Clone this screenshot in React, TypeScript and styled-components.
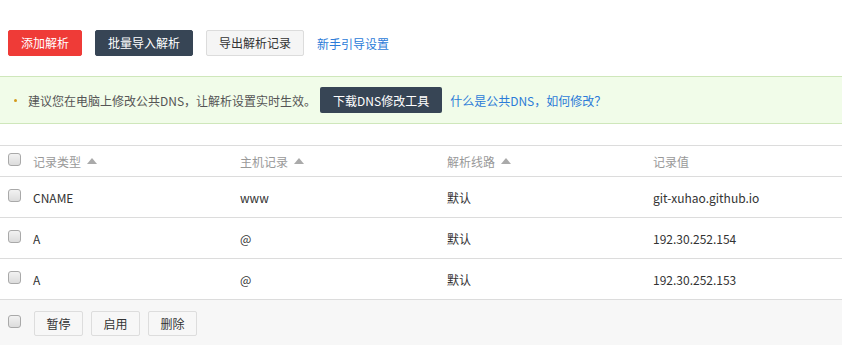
import React from "react";
import styled, { createGlobalStyle } from "styled-components";

const Global = createGlobalStyle`
  html, body { margin: 0; padding: 0; background: #fff; }
  body { font-family: "Noto Sans CJK SC", "Noto Sans", sans-serif; font-size: 12px; color: #333; }
`;

const Page = styled.div`
  width: 842px;
`;

const Toolbar = styled.div`
  display: flex;
  align-items: center;
  gap: 13px;
  padding: 30px 8px 0 8px;
  height: 26px;
`;

const Button = styled.button<{ $variant: "red" | "dark" | "light" }>`
  height: 26px;
  padding: 0 12px;
  border-radius: 2px;
  font-family: inherit;
  font-size: 12px;
  line-height: 24px;
  cursor: pointer;
  border: 1px solid
    ${(p) => (p.$variant === "red" ? "#ef3b37" : p.$variant === "dark" ? "#374555" : "#dcdcdc")};
  background: ${(p) => (p.$variant === "red" ? "#ef3b37" : p.$variant === "dark" ? "#374555" : "#f5f5f5")};
  color: ${(p) => (p.$variant === "light" ? "#333" : "#fff")};
`;

const Link = styled.a`
  color: #2b7bd8;
  font-size: 12px;
  text-decoration: none;
`;

const Banner = styled.div`
  margin-top: 20px;
  height: 46px;
  background: #f1fce9;
  border-top: 1px solid #cfe7bb;
  border-bottom: 1px solid #cfe7bb;
  display: flex;
  align-items: center;
  padding-left: 14px;
  color: #555;
  font-size: 12px;
`;

const Dot = styled.span`
  width: 3px;
  height: 3px;
  border-radius: 50%;
  background: #d49a1c;
  margin-right: 11px;
`;

const SmallDark = styled.button`
  margin: 0 8px 0 4px;
  height: 26px;
  padding: 0 13px;
  border: none;
  border-radius: 2px;
  background: #374555;
  color: #fff;
  font-family: inherit;
  font-size: 12px;
`;

const Table = styled.div`
  margin-top: 21px;
  border-top: 1px solid #dcdcdc;
`;

const Row = styled.div<{ $head?: boolean }>`
  display: grid;
  grid-template-columns: 33px 207px 207px 206px 1fr;
  align-items: center;
  height: ${(p) => (p.$head ? "30px" : "40px")};
  border-bottom: 1px solid #dcdcdc;
  color: ${(p) => (p.$head ? "#999" : "#333")};
  font-size: 12px;
`;

const CheckCell = styled.div`
  padding-left: 8px;
  display: flex;
  align-items: center;
`;

const Check = styled.span`
  display: inline-block;
  width: 11px;
  height: 11px;
  border: 1px solid #a9a9a9;
  border-radius: 3px;
  background: linear-gradient(#f2f2f2, #dcdcdc);
  margin-top: -4px;
`;

const Cell = styled.div`
  display: flex;
  align-items: center;
  gap: 4px;
`;

const SortUp = styled.span`
  width: 0;
  height: 0;
  border-left: 5px solid transparent;
  border-right: 5px solid transparent;
  border-bottom: 6px solid #aaa;
  margin-left: 2px;
`;

const Footer = styled.div`
  display: flex;
  align-items: center;
  gap: 8px;
  height: 46px;
  background: #f7f7f7;
  padding-left: 8px;
`;

const FootBtn = styled.button<{ $first?: boolean }>`
  height: 25px;
  width: 49px;
  border: 1px solid #ddd;
  border-radius: 2px;
  background: #f7f7f7;
  color: #333;
  font-family: inherit;
  font-size: 12px;
  margin-left: ${(p) => (p.$first ? "5px" : "0")};
`;

const rows = [
  ["CNAME", "www", "默认", "git-xuhao.github.io"],
  ["A", "@", "默认", "192.30.252.154"],
  ["A", "@", "默认", "192.30.252.153"],
];

export default function App() {
  return (
    <Page>
      <Global />
      <Toolbar>
        <Button $variant="red">添加解析</Button>
        <Button $variant="dark">批量导入解析</Button>
        <Button $variant="light">导出解析记录</Button>
        <Link>新手引导设置</Link>
      </Toolbar>
      <Banner>
        <Dot />
        建议您在电脑上修改公共DNS，让解析设置实时生效。
        <SmallDark>下载DNS修改工具</SmallDark>
        <Link>什么是公共DNS，如何修改？</Link>
      </Banner>
      <Table>
        <Row $head>
          <CheckCell><Check /></CheckCell>
          <Cell>记录类型<SortUp /></Cell>
          <Cell>主机记录<SortUp /></Cell>
          <Cell>解析线路<SortUp /></Cell>
          <Cell>记录值</Cell>
        </Row>
        {rows.map((r, i) => (
          <Row key={i}>
            <CheckCell><Check /></CheckCell>
            {r.map((c, j) => (
              <Cell key={j}>{c}</Cell>
            ))}
          </Row>
        ))}
        <Footer>
          <Check />
          <FootBtn $first>暂停</FootBtn>
          <FootBtn>启用</FootBtn>
          <FootBtn>删除</FootBtn>
        </Footer>
      </Table>
    </Page>
  );
}
